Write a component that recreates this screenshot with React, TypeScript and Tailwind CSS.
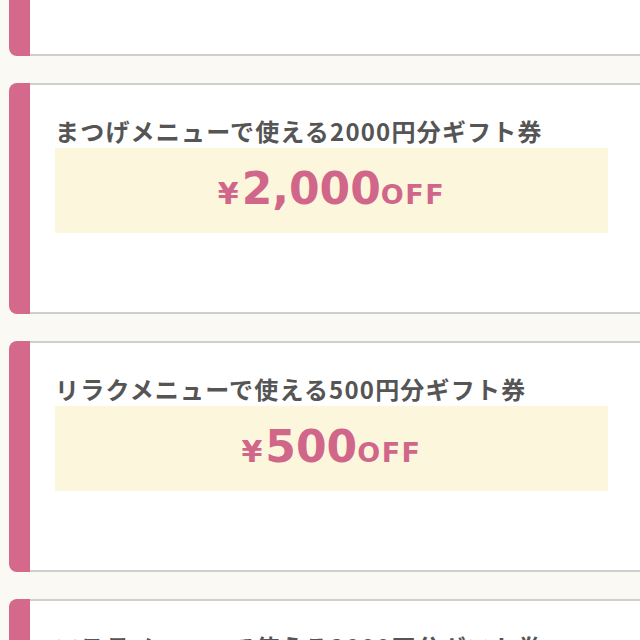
const coupons = [
  { title: 'まつげメニューで使える2000円分ギフト券', yen: '2,000' },
  { title: 'まつげメニューで使える2000円分ギフト券', yen: '2,000' },
  { title: 'リラクメニューで使える500円分ギフト券', yen: '500' },
  { title: 'エステメニューで使える3000円分ギフト券', yen: '3,000' },
];

function CouponCard({ title, yen }: { title: string; yen: string }) {
  return (
    <div className="flex pl-[9px]">
      <div className="w-[21px] shrink-0 rounded-l-lg bg-[#d4698b]" />
      <div className="flex-1 bg-white border-t-2 border-b-2 border-[#cfcfcf] pl-[25px] pr-[32px] pt-[29px] pb-[79px]">
        <h3
          className="text-[24px] leading-[34px] font-bold text-[#555555] tracking-[1.2px]"
          style={{ fontFamily: '"Noto Sans CJK JP", "Noto Sans", sans-serif' }}
        >
          {title}
        </h3>
        <div
          className="h-[85px] bg-[#fcf7dc] flex items-center justify-center text-[#d0668a] font-bold pt-[1px]"
          style={{ fontFamily: '"DejaVu Sans", Verdana, sans-serif' }}
        >
          <span className="flex items-baseline">
            <span className="text-[30px] mr-[3px]">¥</span>
            <span className="text-[44px] leading-none">{yen}</span>
            <span className="text-[27px] tracking-[1.5px]">OFF</span>
          </span>
        </div>
      </div>
    </div>
  );
}

export default function App() {
  return (
    <div className="w-[640px] h-[640px] overflow-hidden bg-[#faf9f4]">
      <div className="mt-[-175px] flex flex-col gap-[27px]">
        {coupons.map((c, i) => (
          <CouponCard key={i} title={c.title} yen={c.yen} />
        ))}
      </div>
    </div>
  );
}
